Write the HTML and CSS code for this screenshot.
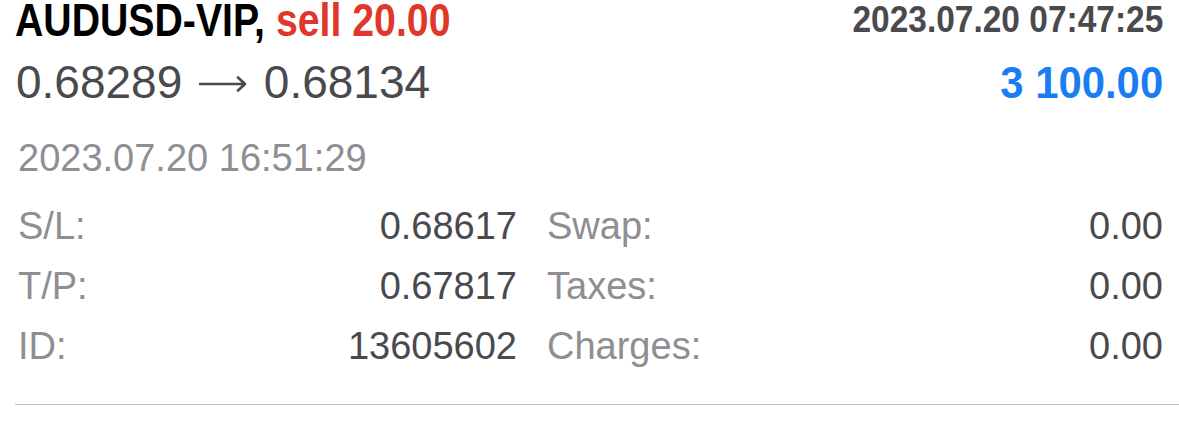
FILE: index.html
```html
<!DOCTYPE html>
<html lang="en">

<head>
    <meta charset="UTF-8">
    <meta name="viewport" content="width=device-width, initial-scale=1.0">
    <title>Deal AUDUSD-VIP</title>
    <link rel="stylesheet" href="styles.css">
</head>

<body>
    <div class="deal">
        <div class="deal-head">
            <div class="symbol">AUDUSD-VIP, <span class="sell">sell 20.00</span></div>
            <div class="open-time">2023.07.20 07:47:25</div>
        </div>
        <div class="deal-prices">
            <div class="prices">
                0.68289
                <svg class="arrow" width="48" height="16" viewBox="0 0 48 16">
                    <path d="M1 8H46M39 1.5L46 8L39 14.5" fill="none" stroke="#4a4a4e" stroke-width="2.6" stroke-linecap="round" stroke-linejoin="round"/>
                </svg>
                0.68134
            </div>
            <div class="profit">3 100.00</div>
        </div>
        <div class="close-time">2023.07.20 16:51:29</div>

        <div class="details">
            <div class="item"><span class="label">S/L:</span><span class="value">0.68617</span></div>
            <div class="item"><span class="label">Swap:</span><span class="value">0.00</span></div>
            <div class="item"><span class="label">T/P:</span><span class="value">0.67817</span></div>
            <div class="item"><span class="label">Taxes:</span><span class="value">0.00</span></div>
            <div class="item"><span class="label">ID:</span><span class="value">13605602</span></div>
            <div class="item"><span class="label">Charges:</span><span class="value">0.00</span></div>
        </div>
    </div>
</body>

</html>
```

FILE: styles.css
```css
body {
    font-family: 'Liberation Sans', Arial, sans-serif;
    margin: 0;
    padding: 0;
    background: #ffffff;
    color: #4a4a4e;
}

.deal {
    margin-left: 15px;
    padding: 0 16px 28px 0;
    border-bottom: 1px solid #bdbdbd;
}

.deal-head {
    display: flex;
    justify-content: space-between;
    align-items: flex-start;
}

/* condensed bold look of the app font */
.symbol,
.open-time,
.profit {
    display: inline-block;
    font-weight: bold;
    white-space: nowrap;
}

.symbol {
    font-size: 46px;
    line-height: 44px;
    margin-top: -2px;
    color: #000000;
    transform: scaleX(0.853);
    transform-origin: left center;
}

.sell {
    color: #e1372a;
}

.open-time {
    font-size: 36px;
    line-height: 40px;
    color: #4a4a4e;
    transform: scaleX(0.93);
    transform-origin: right center;
}

.deal-prices {
    display: flex;
    justify-content: space-between;
    align-items: baseline;
    margin-top: 15px;
}

.prices {
    font-size: 46px;
    line-height: 50px;
    padding-left: 1px;
    white-space: nowrap;
}

.arrow {
    margin: 0 4px;
    vertical-align: 6px;
}

.profit {
    font-size: 45px;
    line-height: 50px;
    color: #1a7ef2;
    transform: scaleX(0.93);
    transform-origin: right center;
}

.close-time {
    font-size: 38px;
    line-height: 44px;
    color: #8e8e93;
    margin-top: 28px;
    padding-left: 3px;
}

.details {
    display: grid;
    grid-template-columns: 499px 1fr;
    column-gap: 30px;
    margin-top: 16px;
    padding-left: 3px;
    font-size: 38px;
    line-height: 60px;
}

.item {
    display: flex;
    justify-content: space-between;
}

.label {
    color: #8e8e93;
}

.value {
    color: #4a4a4e;
}
```
